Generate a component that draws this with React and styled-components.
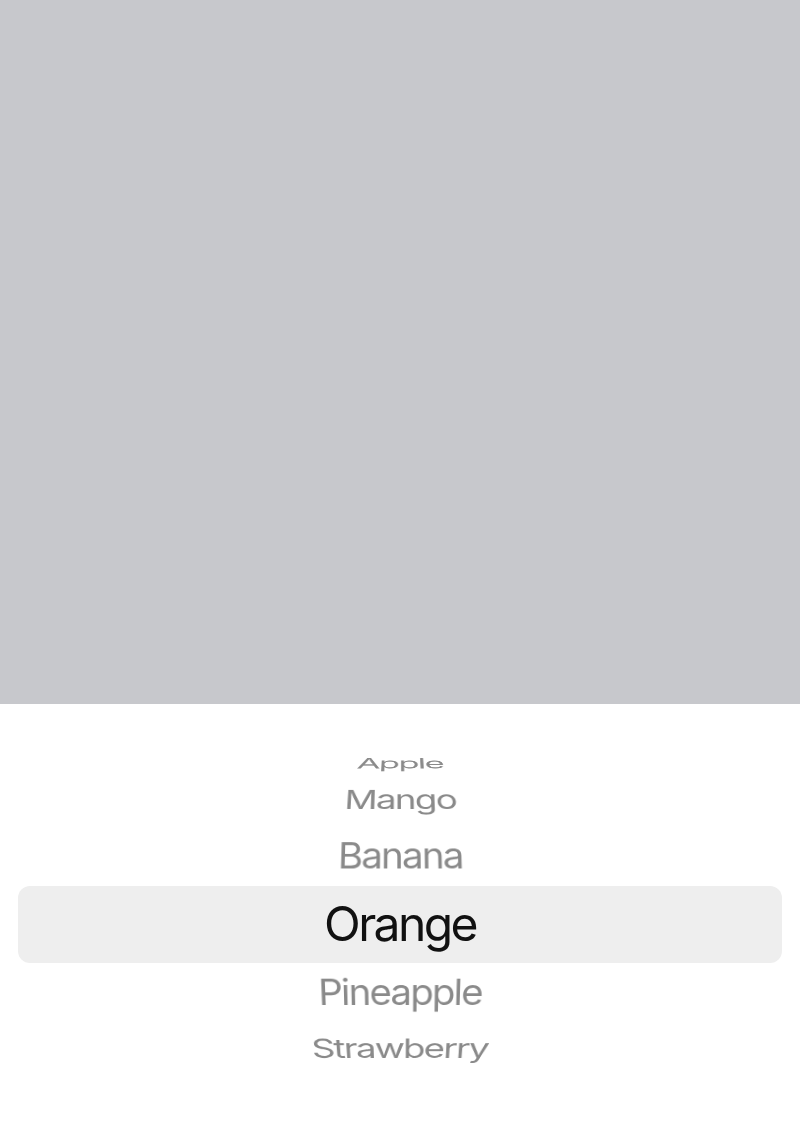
import React from 'react';
import styled, { createGlobalStyle } from 'styled-components';

const GlobalStyle = createGlobalStyle`
  html, body {
    margin: 0;
    padding: 0;
    background: #ffffff;
  }
  body {
    font-family: Inter, "Liberation Sans", sans-serif;
  }
`;

const Page = styled.div`
  display: flex;
  flex-direction: column;
  height: 100vh;
`;

const Backdrop = styled.div`
  flex: 1;
  background: #c7c8cc;
`;

const Sheet = styled.div`
  height: 440px;
  background: #ffffff;
  display: flex;
  align-items: center;
  justify-content: center;
  overflow: hidden;
`;

const Wheel = styled.div`
  display: grid;
  width: 100%;
  height: 440px;
  align-items: center;
  justify-items: center;
  perspective: 650px;
`;

const Highlight = styled.div`
  grid-area: 1 / 1;
  width: calc(100% - 36px);
  height: 77px;
  border-radius: 12px;
  background: #eeeeee;
`;

const Item = styled.div`
  grid-area: 1 / 1;
  height: 69px;
  line-height: 67px;
  font-size: ${p => (p.$selected ? '48px' : '39px')};
  letter-spacing: ${p => (p.$selected ? '-2.6px' : '-1.8px')};
  color: ${p => (p.$selected ? '#111111' : '#8a8a8a')};
  white-space: nowrap;
`;

const fruits = ['Apple', 'Mango', 'Banana', 'Orange', 'Pineapple', 'Strawberry'];
const SELECTED = 3;
const STEP = 17.5;
const RADIUS = 231;

export default function App() {
  return (
    <>
      <GlobalStyle />
      <Page>
        <Backdrop />
        <Sheet>
          <Wheel>
            <Highlight />
            {fruits.map((name, index) => {
              const angle = -(index - SELECTED) * STEP;
              return (
                <Item
                  key={name}
                  $selected={index === SELECTED}
                  style={{ transform: `translateZ(-${RADIUS}px) rotateX(${angle}deg) translateZ(${RADIUS}px)` }}
                >
                  {name}
                </Item>
              );
            })}
          </Wheel>
        </Sheet>
      </Page>
    </>
  );
}
